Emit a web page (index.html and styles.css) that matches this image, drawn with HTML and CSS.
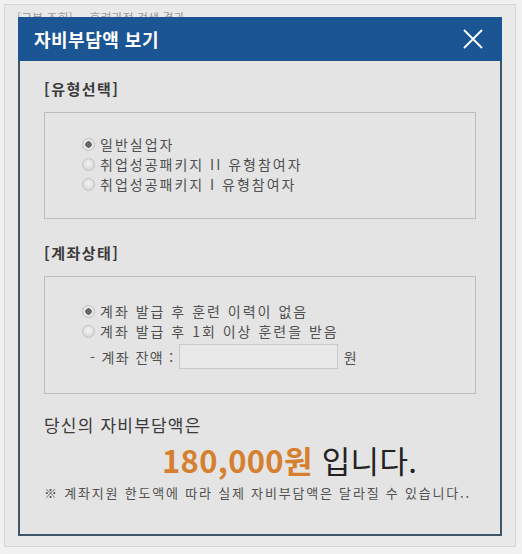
FILE: index.html
```html
<!DOCTYPE html>
<html lang="ko">
<head>
  <meta charset="UTF-8" />
  <meta name="viewport" content="width=device-width, initial-scale=1.0"/>
  <title>자비부담액 보기</title>
  <link rel="stylesheet" href="styles.css">
</head>
<body>

  <div class="page">
    <p class="page-top">[구분 조회]&nbsp;&nbsp;&nbsp;&nbsp;&nbsp;훈련과정 검색 결과</p>

    <div class="dialog">
      <div class="dialog-head">
        <h2>자비부담액 보기</h2>
        <button class="close" aria-label="닫기">
          <svg width="22" height="22" viewBox="0 0 22 22">
            <path d="M2 2 L20 20 M20 2 L2 20" stroke="#fff" stroke-width="1.8" fill="none"/>
          </svg>
        </button>
      </div>

      <div class="dialog-body">
        <h3>[유형선택]</h3>
        <div class="box box-type">
          <label><input type="radio" name="type" checked> 일반실업자</label>
          <label><input type="radio" name="type"> 취업성공패키지 II 유형참여자</label>
          <label><input type="radio" name="type"> 취업성공패키지 I 유형참여자</label>
        </div>

        <h3>[계좌상태]</h3>
        <div class="box box-account">
          <label><input type="radio" name="acct" checked> 계좌 발급 후 훈련 이력이 없음</label>
          <label><input type="radio" name="acct"> 계좌 발급 후 1회 이상 훈련을 받음</label>
          <div class="balance">
            <span>- 계좌 잔액 :</span>
            <input type="text" class="balance-input">
            <span>원</span>
          </div>
        </div>

        <p class="result-label">당신의 자비부담액은</p>
        <p class="result"><strong>180,000원</strong> 입니다.</p>
        <p class="note">※ 계좌지원 한도액에 따라 실제 자비부담액은 달라질 수 있습니다..</p>
      </div>
    </div>
  </div>

</body>
</html>
```

FILE: styles.css
```css
body {
  margin: 0;
  background: #f1f1f1;
  font-family: "Noto Sans CJK KR", "Noto Sans", sans-serif;
  color: #444;
}

.page {
  position: relative;
  margin: 4px 6px 0 4px;
  height: 543px;
  border: 1px solid #d6d6d6;
  background: #e9e9e9;
  box-sizing: border-box;
}

.page-top {
  margin: 0;
  padding: 4px 0 0 12px;
  font-size: 12px;
  color: #9a9a9a;
}

/* popup sits over the page */
.dialog {
  position: absolute;
  left: 13px;
  top: 12px;
  width: 484px;
  height: 519px;
  box-sizing: border-box;
  border: 2px solid #3e5668;
  border-top: none;
  background: #e4e4e4;
}

.dialog-head {
  display: flex;
  align-items: center;
  justify-content: space-between;
  height: 44px;
  margin: 0 -2px;
  padding: 0 18px 0 16px;
  background: #1c5593;
}

.dialog-head h2 {
  margin: 0;
  font-size: 18px;
  font-weight: bold;
  color: #fff;
  letter-spacing: 0.5px;
}

.close {
  display: flex;
  padding: 0;
  border: none;
  background: none;
  cursor: pointer;
}

.dialog-body {
  padding: 19px 24px 0 24px;
}

h3 {
  margin: 0;
  font-size: 15px;
  line-height: 18px;
  font-weight: bold;
  color: #3a3a3a;
  letter-spacing: 1.5px;
}

.box {
  display: flex;
  flex-direction: column;
  margin: 14px 0 0;
  border: 1px solid #bdbdbd;
  box-sizing: border-box;
  padding-left: 37px;
  font-size: 14px;
  line-height: 20px;
  letter-spacing: 2px;
  color: #505050;
}

.box label {
  display: flex;
  align-items: center;
  height: 20px;
}

.box-type {
  height: 107px;
  padding-top: 21px;
  margin-bottom: 25px;
}

.box-account {
  height: 118px;
  padding-top: 24px;
}

input[type="radio"] {
  appearance: none;
  width: 13px;
  height: 13px;
  margin: 0 5px 0 0;
  border: 1px solid #c2c2c2;
  border-radius: 50%;
  background: radial-gradient(circle at 50% 40%, #f4f4f4, #cfcfcf);
}

input[type="radio"]:checked {
  background: radial-gradient(circle, #666 0 3px, #f0f0f0 3.5px, #cfcfcf);
}

.balance {
  display: flex;
  align-items: center;
  gap: 4px;
  margin-top: 3px;
  padding-left: 8px;
  letter-spacing: 1.4px;
}

.balance-input {
  width: 159px;
  height: 25px;
  margin-right: 2px;
  box-sizing: border-box;
  border: 1px solid #c9c9c9;
  background: #e8e8e8;
}

.result-label {
  margin: 18px 0 0;
  font-size: 17px;
  letter-spacing: 1.2px;
  color: #3a3a3a;
}

.result {
  margin: 4px 0 0;
  padding-left: 118px;
  font-size: 31px;
  line-height: 38px;
  letter-spacing: 0.3px;
  color: #222;
}

.result strong {
  color: #d6802f;
}

.note {
  margin: 4px 0 0;
  font-size: 13px;
  letter-spacing: 1.8px;
  white-space: nowrap;
  color: #505050;
}
```
